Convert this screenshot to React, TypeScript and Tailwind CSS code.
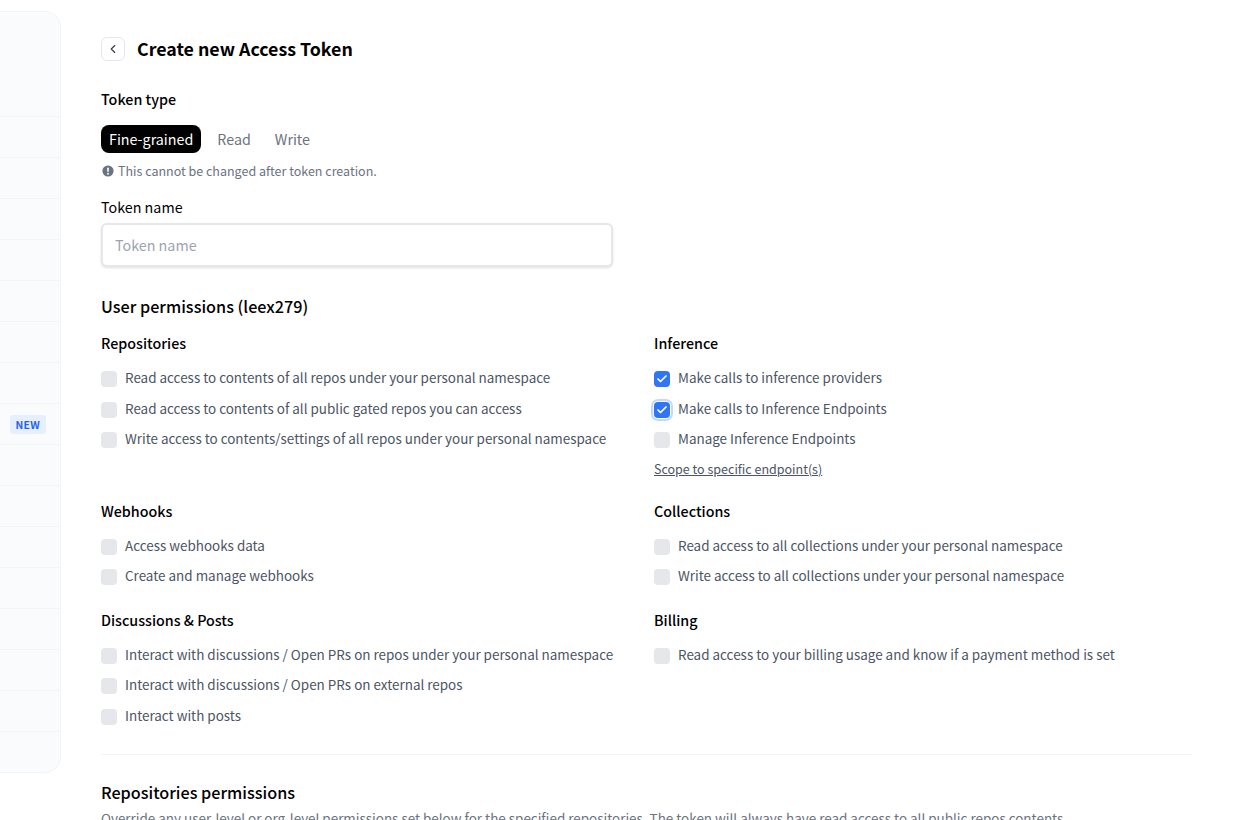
import { ChevronLeft, Check } from "lucide-react"

type Perm = { label: string; checked?: boolean; focused?: boolean }
type Group = { title: string; perms: Perm[]; link?: string; className: string }

const groups: Group[] = [
  {
    title: "Repositories",
    className: "h-[167.5px]",
    perms: [
      { label: "Read access to contents of all repos under your personal namespace" },
      { label: "Read access to contents of all public gated repos you can access" },
      { label: "Write access to contents/settings of all repos under your personal namespace" },
    ],
  },
  {
    title: "Inference",
    className: "h-[167.5px]",
    link: "Scope to specific endpoint(s)",
    perms: [
      { label: "Make calls to inference providers", checked: true },
      { label: "Make calls to Inference Endpoints", checked: true, focused: true },
      { label: "Manage Inference Endpoints" },
    ],
  },
  {
    title: "Webhooks",
    className: "h-[109px]",
    perms: [{ label: "Access webhooks data" }, { label: "Create and manage webhooks" }],
  },
  {
    title: "Collections",
    className: "h-[109px]",
    perms: [
      { label: "Read access to all collections under your personal namespace" },
      { label: "Write access to all collections under your personal namespace" },
    ],
  },
  {
    title: "Discussions & Posts",
    className: "",
    perms: [
      { label: "Interact with discussions / Open PRs on repos under your personal namespace" },
      { label: "Interact with discussions / Open PRs on external repos" },
      { label: "Interact with posts" },
    ],
  },
  {
    title: "Billing",
    className: "",
    perms: [{ label: "Read access to your billing usage and know if a payment method is set" }],
  },
]

function PermRow({ perm }: { perm: Perm }) {
  return (
    <div className="flex h-[30.5px] items-center">
      <span
        className={`mt-[4px] flex h-4 w-4 shrink-0 items-center justify-center rounded-[4px] ${
          perm.checked ? "bg-[#2f75f6]" : "bg-[#e5e7eb]"
        } ${perm.focused ? "ring-2 ring-[#bfdbfe] ring-offset-1" : ""}`}
      >
        {perm.checked && <Check className="h-3 w-3 text-white" strokeWidth={3.5} />}
      </span>
      <span className="ml-2 whitespace-nowrap text-[13.45px] leading-5 text-[#4b5563]">{perm.label}</span>
    </div>
  )
}

function Sidebar() {
  const rows = Array.from({ length: 16 })
  return (
    <aside className="mt-[11px] flex h-[762px] w-[61px] shrink-0 flex-col rounded-r-2xl border-y border-r border-[#f3f4f6] bg-[#fafbfc] pt-[104px]">
      {rows.map((_, i) => (
        <div key={i} className="flex h-[41px] shrink-0 items-center justify-end border-t border-[#f3f4f6] pr-[14px]">
          {i === 7 && (
            <span className="rounded-[4px] bg-[#e5effe] px-[6px] text-[10.4px] font-bold leading-[19px] tracking-wide text-[#2563eb]">
              NEW
            </span>
          )}
        </div>
      ))}
    </aside>
  )
}

export default function App() {
  return (
    <div
      className="flex h-screen overflow-hidden bg-white text-black"
      style={{ fontFamily: '"Noto Sans CJK SC", "Noto Sans", sans-serif' }}
    >
      <Sidebar />
      <main className="w-[1131px] shrink-0 pl-10 pr-0 pt-[37px]">
        <div className="flex h-6 items-center">
          <button className="flex h-6 w-6 items-center justify-center rounded-md border border-[#e5e7eb] bg-white text-[#374151]">
            <ChevronLeft className="h-3.5 w-3.5" />
          </button>
          <h1 className="mb-[2px] ml-3 text-[17.8px] font-bold leading-6">Create new Access Token</h1>
        </div>

        <div className="mt-[28px] text-[14.3px] font-medium leading-5">Token type</div>
        <div className="mt-[16px] flex items-center">
          <span className="flex h-7 items-center rounded-lg bg-black px-2 text-[14.3px] leading-5 text-white">Fine-grained</span>
          <span className="ml-4 text-[14.3px] leading-5 text-[#6b7280]">Read</span>
          <span className="ml-6 text-[14.3px] leading-5 text-[#6b7280]">Write</span>
        </div>
        <div className="mt-[10px] flex h-4 items-center text-[12.5px] leading-4 text-[#6b7280]">
          <svg viewBox="0 0 12 12" className="ml-[1px] mr-[4px] h-3 w-3">
            <circle cx="6" cy="6" r="5.6" fill="#6b7280" />
            <rect x="5.2" y="2.6" width="1.6" height="4.2" rx="0.6" fill="#fff" />
            <circle cx="6" cy="8.7" r="0.95" fill="#fff" />
          </svg>
          This cannot be changed after token creation.
        </div>

        <div className="mt-[18px] text-[14.3px] leading-5">Token name</div>
        <div className="mt-[6px] flex h-[44px] w-[512px] items-center rounded-md border-2 border-[#e5e7eb] bg-white pl-3 text-[14.3px] text-[#9ca3af] shadow-sm">
          Token name
        </div>

        <h2 className="mt-[27px] text-[16.2px] font-medium leading-6">User permissions (leex279)</h2>

        <div className="mt-[15px] grid w-[1091px] grid-cols-2 gap-x-[15px]">
          {groups.map((g) => (
            <section key={g.title} className={g.className}>
              <h3 className="text-[14.3px] font-medium leading-5">{g.title}</h3>
              <div className="mt-[9px]">
                {g.perms.map((p) => (
                  <PermRow key={p.label} perm={p} />
                ))}
              </div>
              {g.link && <a className="mt-[5px] block text-[12.5px] leading-5 text-[#4b5563] underline">{g.link}</a>}
            </section>
          ))}
        </div>

        <div className="mt-[23.5px] w-[1091px] border-t border-[#f3f4f6]" />
        <h2 className="mt-[25px] text-[16.2px] font-medium leading-6">Repositories permissions</h2>
        <p className="mt-[4px] whitespace-nowrap text-[13.45px] leading-5 text-[#6b7280]">
          Override any user-level or org-level permissions set below for the specified repositories. The token will always have read access to all public repos contents.
        </p>
      </main>
    </div>
  )
}
